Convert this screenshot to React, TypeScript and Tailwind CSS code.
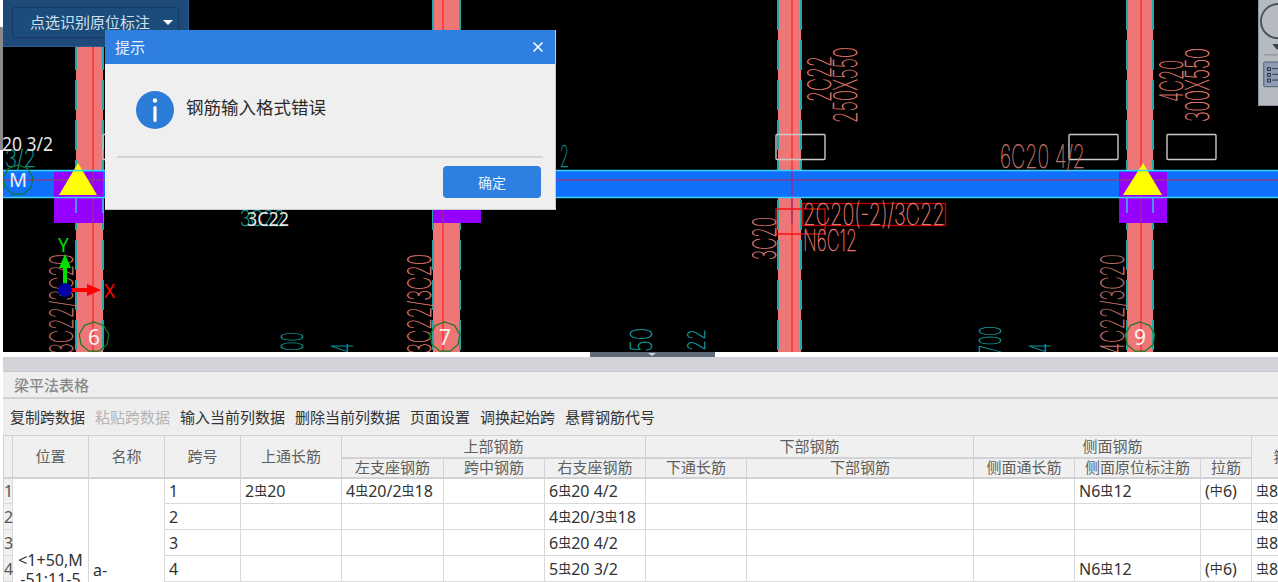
import { X } from "lucide-react"

const SALMON = "#e57c72"
const DIM = "#c9766a"
const TEAL = "#0f9a9a"

type CadLabel = {
  text: string
  x: number
  y: number
  len: number
  size: number
  color: string
  vertical?: boolean
}

const cadLabels: CadLabel[] = [
  { text: "2C22", x: 831, y: 102, len: 46, size: 32, color: SALMON, vertical: true },
  { text: "250X550", x: 857, y: 123, len: 76, size: 32, color: SALMON, vertical: true },
  { text: "6C20 4/2", x: 1000, y: 168, len: 85, size: 32, color: DIM },
  { text: "4C20", x: 1183, y: 102, len: 42, size: 32, color: SALMON, vertical: true },
  { text: "300X550", x: 1209, y: 122, len: 74, size: 32, color: SALMON, vertical: true },
  { text: "3C20", x: 776, y: 260, len: 43, size: 32, color: SALMON, vertical: true },
  { text: "2C20(-2)/3C22", x: 803, y: 225, len: 142, size: 30, color: SALMON },
  { text: "N6C12", x: 803, y: 251, len: 54, size: 30, color: SALMON },
  { text: "3C22/3C20", x: 73, y: 354, len: 100, size: 32, color: DIM, vertical: true },
  { text: "3C22/3C20", x: 431, y: 354, len: 100, size: 32, color: SALMON, vertical: true },
  { text: "4C22/3C20", x: 1124, y: 354, len: 100, size: 32, color: DIM, vertical: true },
  { text: "3/2", x: 5, y: 167, len: 31, size: 24, color: TEAL },
  { text: "2", x: 560, y: 167, len: 9, size: 30, color: TEAL },
  { text: "3C22", x: 240, y: 226, len: 45, size: 22, color: TEAL },
  { text: "00", x: 303, y: 351, len: 19, size: 30, color: TEAL, vertical: true },
  { text: "4", x: 353, y: 353, len: 10, size: 30, color: TEAL, vertical: true },
  { text: "50", x: 652, y: 352, len: 24, size: 30, color: TEAL, vertical: true },
  { text: "22", x: 705, y: 351, len: 22, size: 24, color: TEAL, vertical: true },
  { text: "700", x: 1001, y: 354, len: 28, size: 30, color: TEAL, vertical: true },
  { text: "4", x: 1051, y: 353, len: 10, size: 30, color: TEAL, vertical: true },
]

// columns drawn over the horizontal beam: left edge, right edge, red axis line
const columns = [
  { left: 76, right: 103, axis: 93 },
  { left: 433, right: 460, axis: 443 },
  { left: 778, right: 801, axis: 792 },
  { left: 1127, right: 1153, axis: 1141 },
]

function polygonPoints(cx: number, cy: number, r: number, sides: number) {
  return Array.from({ length: sides }, (_, i) => {
    const a = (i / sides) * Math.PI * 2 - Math.PI / 2
    return `${cx + Math.cos(a) * r},${cy + Math.sin(a) * r}`
  }).join(" ")
}

function Bubble({ cx, cy, text }: { cx: number; cy: number; text: string }) {
  return (
    <g>
      <polygon points={polygonPoints(cx, cy, 15, 9)} fill="none" stroke="#0f7a22" strokeWidth="1.2" />
      <text x={cx} y={cy + 8} textAnchor="middle" fontSize="21" fill="#f2f2f2" className="font-['Noto_Sans',sans-serif]">
        {text}
      </text>
    </g>
  )
}

function CadDrawing() {
  return (
    <svg viewBox="0 0 1275 352" className="block h-full w-full">
      <rect x="-3" y="0" width="1278" height="352" fill="#000" />
      <g transform="translate(-3 0)">
        {columns.map((c) => (
          <g key={c.left}>
            <rect x={c.left} y="0" width={c.right - c.left} height="352" fill="#ee7676" />
            <line x1={c.left} x2={c.left} y1="0" y2="352" stroke="#23a8a8" strokeWidth="2" strokeDasharray="30 10" />
            <line x1={c.right} x2={c.right} y1="0" y2="352" stroke="#23a8a8" strokeWidth="2" strokeDasharray="30 10" />
            <line x1={c.axis} x2={c.axis} y1="0" y2="352" stroke="#ff3333" strokeWidth="1.6" />
          </g>
        ))}

        <rect x="3" y="170" width="1275" height="28" fill="#1070fb" />
        <rect x="54" y="172" width="49" height="51" fill="#9500ff" />
        <rect x="433" y="172" width="48" height="51" fill="#9500ff" />
        <rect x="1119" y="172" width="48" height="51" fill="#9500ff" />
        <line x1="3" x2="1278" y1="180" y2="180" stroke="#8c3a8e" strokeWidth="1.6" />
        {columns.map((c) => (
          <line key={c.axis} x1={c.axis} x2={c.axis} y1="170" y2="223" stroke="#a02a90" strokeWidth="1.4" />
        ))}
        {[76, 103, 1127, 1153].map((x) => (
          <line key={x} x1={x} x2={x} y1="198" y2="213" stroke="#38b8f0" strokeWidth="1.6" />
        ))}

        <polygon points="78,163 59,195 97,195" fill="#ffff00" />
        <polygon points="1143,163 1123,195 1162,195" fill="#ffff00" />
        <line x1="3" x2="1278" y1="170.5" y2="170.5" stroke="#38d2f5" strokeWidth="1.6" />
        <line x1="3" x2="1278" y1="197.5" y2="197.5" stroke="#38d2f5" strokeWidth="1.6" />

        {[103, 776, 1069, 1167].map((x) => (
          <rect key={x} x={x} y="134.5" width="49" height="25" rx="1" fill="none" stroke="#c9c9c9" strokeWidth="1.4" />
        ))}
        <rect x="776" y="209" width="49" height="25" fill="none" stroke="#e01010" strokeWidth="1.2" />
        <rect x="802.5" y="203.5" width="143" height="22" fill="none" stroke="#b80000" strokeWidth="1.4" />
        <line x1="778" x2="801" y1="209" y2="209" stroke="#ff2020" strokeWidth="1.2" />
        <line x1="778" x2="801" y1="234" y2="234" stroke="#ff2020" strokeWidth="1.2" />

        {cadLabels.map((l) => (
          <text
            key={`${l.text}-${l.x}-${l.y}`}
            transform={`translate(${l.x} ${l.y})${l.vertical ? " rotate(-90)" : ""}`}
            fontSize={l.size}
            fill={l.color}
            stroke={l.color}
            strokeWidth="0.5"
            textLength={l.len}
            lengthAdjust="spacingAndGlyphs"
            className="font-['Inter',sans-serif] font-thin"
          >
            {l.text}
          </text>
        ))}

        <text x="2" y="151" fontSize="19" fill="#e4e4e4" textLength="51" lengthAdjust="spacingAndGlyphs" className="font-['Noto_Sans',sans-serif]">
          20 3/2
        </text>
        <text x="247" y="226" fontSize="19" fill="#e8e8e8" textLength="42" lengthAdjust="spacingAndGlyphs" className="font-['Noto_Sans',sans-serif]">
          3C22
        </text>

        <polygon points={polygonPoints(18, 180, 15, 9)} fill="none" stroke="#0f7a22" strokeWidth="1.2" />
        <text x="18" y="187" textAnchor="middle" fontSize="20" fill="#e8f2ff" className="font-['Noto_Sans',sans-serif]">
          M
        </text>
        <Bubble cx={94} cy={337} text="6" />
        <Bubble cx={445} cy={337} text="7" />
        <Bubble cx={1140} cy={337} text="9" />

        {/* UCS axes */}
        <rect x="63" y="262" width="4" height="24" fill="#00e000" />
        <polygon points="65,254 59,268 71,268" fill="#00e000" />
        <text x="58" y="252" fontSize="19" fill="#00e000" className="font-['Noto_Sans',sans-serif]">
          Y
        </text>
        <rect x="70" y="288" width="20" height="4" fill="#ff0000" />
        <polygon points="101,290 87,284 87,296" fill="#ff0000" />
        <circle cx="65" cy="290" r="7" fill="#0000a8" />
        <text x="104" y="298" fontSize="19" fill="#ff0000" className="font-['Noto_Sans',sans-serif]">
          X
        </text>
      </g>
    </svg>
  )
}

function SidePalette() {
  return (
    <div className="absolute right-0 top-0 flex h-[106px] w-[20px] flex-col overflow-hidden border-b border-l border-[#8d939b] bg-[#b6bac1]">
      <svg viewBox="0 0 20 106" className="h-full w-full">
        <circle cx="20" cy="20" r="18" fill="none" stroke="#4a525c" strokeWidth="2" />
        <polygon points="14,44 24,44 19,50" fill="#3a424c" />
        <line x1="5" x2="20" y1="55.5" y2="55.5" stroke="#848a92" />
        <rect x="5" y="63" width="20" height="26" rx="1" fill="#8e9cb4" stroke="#4e5a6e" />
        <rect x="9" y="69" width="3" height="3" fill="none" stroke="#26303e" />
        <rect x="9" y="75" width="3" height="3" fill="none" stroke="#26303e" />
        <rect x="9" y="81" width="3" height="3" fill="none" stroke="#26303e" />
        <line x1="14" x2="20" y1="70" y2="70" stroke="#26303e" />
        <line x1="14" x2="20" y1="76" y2="76" stroke="#26303e" />
        <line x1="14" x2="20" y1="82" y2="82" stroke="#26303e" />
      </svg>
    </div>
  )
}

function MessageDialog() {
  return (
    <div className="absolute left-[102px] top-[30px] flex h-[180px] w-[451px] flex-col border-b border-r border-[#c9cbd0] bg-[#efefef]">
      <div className="flex h-[34px] items-center justify-between bg-[#2e7fe0] pl-[10px] pr-[9px] text-[15px] text-[#e8f1fc]">
        <span>提示</span>
        <X size={16} strokeWidth={2.5} className="text-white" />
      </div>
      <div className="flex h-[92px] items-center gap-[12px] pl-[31px]">
        <svg viewBox="0 0 38 38" className="h-[38px] w-[38px]">
          <circle cx="19" cy="19" r="19" fill="#2b7cd6" />
          <circle cx="19" cy="9.5" r="2.2" fill="#fff" />
          <rect x="17.4" y="15" width="3.2" height="16" rx="1.6" fill="#fff" />
        </svg>
        <span className="relative -top-[2px] text-[17.5px] leading-none text-[#2a2a2a]">钢筋输入格式错误</span>
      </div>
      <div className="mx-[12px] h-[2px] bg-[#d4d4d6]" />
      <div className="flex justify-end pr-[14px] pt-[8px]">
        <button className="h-[32px] w-[98px] rounded-[4px] bg-[#2e7fe0] text-[14px] text-[#e6f0fb]">确定</button>
      </div>
    </div>
  )
}

function Bar({ plain }: { plain?: boolean }) {
  return <span className="relative top-[-2px] text-[13px]">{plain ? "中" : "虫"}</span>
}

const colWidths = [
  "w-[9px]", "w-[76px]", "w-[76px]", "w-[76px]", "w-[101px]", "w-[102px]", "w-[101px]",
  "w-[101px]", "w-[101px]", "w-[227px]", "w-[101px]", "w-[126px]", "w-[51px]", "w-[74px]",
]

type Row = { top?: React.ReactNode; left?: React.ReactNode; right?: React.ReactNode; side?: boolean; tie?: boolean }

const rows: Row[] = [
  {
    top: <>2<Bar />20</>,
    left: <>4<Bar />20/2<Bar />18</>,
    right: <>6<Bar />20 4/2</>,
    side: true,
    tie: true,
  },
  { right: <>4<Bar />20/3<Bar />18</> },
  { right: <>6<Bar />20 4/2</> },
  { right: <>5<Bar />20 3/2</>, side: true, tie: true },
  {},
  {},
  {},
]

const th = "border border-b-2 border-[#d2d2d4] bg-[#f0f0f0] p-0 text-center align-middle text-[15px] font-normal leading-none text-[#5e5e5e]"
const td = "border border-[#d9d9da] bg-white pl-[4px] pr-0 py-0 align-middle text-[16px] leading-none text-[#333] whitespace-nowrap overflow-hidden"

function BeamTable() {
  return (
    <table className="w-[1322px] table-fixed border-collapse">
      <colgroup>
        {colWidths.map((w, i) => (
          <col key={i} className={w} />
        ))}
      </colgroup>
      <thead>
        <tr className="h-[22px]">
          <th rowSpan={2} className={th} />
          <th rowSpan={2} className={th}>位置</th>
          <th rowSpan={2} className={th}>名称</th>
          <th rowSpan={2} className={th}>跨号</th>
          <th rowSpan={2} className={th}>上通长筋</th>
          <th colSpan={3} className={th}>上部钢筋</th>
          <th colSpan={2} className={th}>下部钢筋</th>
          <th colSpan={3} className={th}>侧面钢筋</th>
          <th rowSpan={2} className={th}>箍筋</th>
        </tr>
        <tr className="h-[20px]">
          <th className={th}>左支座钢筋</th>
          <th className={th}>跨中钢筋</th>
          <th className={th}>右支座钢筋</th>
          <th className={th}>下通长筋</th>
          <th className={th}>下部钢筋</th>
          <th className={th}>侧面通长筋</th>
          <th className={th}>侧面原位标注筋</th>
          <th className={th}>拉筋</th>
        </tr>
      </thead>
      <tbody>
        {rows.map((row, i) => (
          <tr key={i} className="h-[26px]">
            <td className="border border-[#d9d9da] bg-[#f0f0f0] p-0 text-center text-[16px] leading-none text-[#555]">{i + 1}</td>
            {i === 0 && (
              <>
                <td rowSpan={rows.length} className="border border-[#d9d9da] bg-white px-[3px] pb-0 pt-[2px] text-center align-middle text-[16px] leading-[19px] text-[#333]">
                  {"<1+50,M"}
                  <br />
                  -51;11-5
                </td>
                <td rowSpan={rows.length} className="border border-[#d9d9da] bg-white pb-0 pl-[4px] pt-[2px] align-middle text-[16px] leading-none text-[#333]">
                  a-
                </td>
              </>
            )}
            <td className={td}>{i < 4 ? i + 1 : ""}</td>
            <td className={td}>{row.top}</td>
            <td className={td}>{row.left}</td>
            <td className={td} />
            <td className={td}>{row.right}</td>
            <td className={td} />
            <td className={td} />
            <td className={td} />
            <td className={td}>
              {row.side && <>N6<Bar />12</>}
            </td>
            <td className={td}>
              {row.tie && <>(<Bar plain />6)</>}
            </td>
            <td className={td}>
              {i < 4 && <><Bar />8@100</>}
            </td>
          </tr>
        ))}
      </tbody>
    </table>
  )
}

const toolbarItems = ["复制跨数据", "粘贴跨数据", "输入当前列数据", "删除当前列数据", "页面设置", "调换起始跨", "悬臂钢筋代号"]

export default function App() {
  return (
    <div className="flex h-[582px] w-[1278px] flex-col overflow-hidden bg-white font-['Noto_Sans','Noto_Sans_CJK_SC',sans-serif]">
      {/* CAD viewport */}
      <div className="relative h-[352px] shrink-0 border-l-[3px] border-white">
        <CadDrawing />
        <div className="absolute -left-[3px] top-[27px] h-[123px] w-[3px] bg-[#8a8a8a]" />
        <div className="absolute left-0 top-0 h-[47px] w-[186px] border-b border-r border-[#2a5c92] bg-[#1d4a78] pl-[9px] pt-[7px]">
          <div className="flex h-[31px] w-[167px] items-center rounded-[3px] border border-[#17395f] bg-[#1c4c7c] pl-[17px] text-[15px] text-[#d3e0ec]">
            点选识别原位标注
            <span className="ml-[13px] h-0 w-0 border-x-[5px] border-t-[5px] border-x-transparent border-t-white" />
          </div>
        </div>
        <SidePalette />
        <MessageDialog />
      </div>

      {/* splitter handle */}
      <div className="flex h-[5px] shrink-0 pl-[590px]">
        <div className="flex h-full w-[125px] items-start justify-center bg-[#5f6b78] pr-[2px] pt-[1px]">
          <span className="h-0 w-0 border-x-[4px] border-t-[3px] border-x-transparent border-t-[#cfd4da]" />
        </div>
      </div>

      {/* bottom panel */}
      <div className="flex min-h-0 flex-1 flex-col overflow-hidden border-l-[3px] border-white">
        <div className="h-[15px] shrink-0 border-b border-[#c6c7cb] bg-[#d2d3d8]" />
        <div className="flex h-[27px] shrink-0 items-center border-b-2 border-[#d0d0d2] bg-[#eeeeee] pl-[11px] pt-[1px] text-[15px] font-medium text-[#8a8a8a]">
          梁平法表格
        </div>
        <div className="flex h-[36px] shrink-0 items-center gap-[10px] bg-[#eeeeee] pl-[7px] text-[15px] text-[#333]">
          {toolbarItems.map((item) => (
            <span key={item} className={item === "粘贴跨数据" ? "text-[#b4b4b4]" : ""}>
              {item}
            </span>
          ))}
        </div>
        <BeamTable />
      </div>
    </div>
  )
}
